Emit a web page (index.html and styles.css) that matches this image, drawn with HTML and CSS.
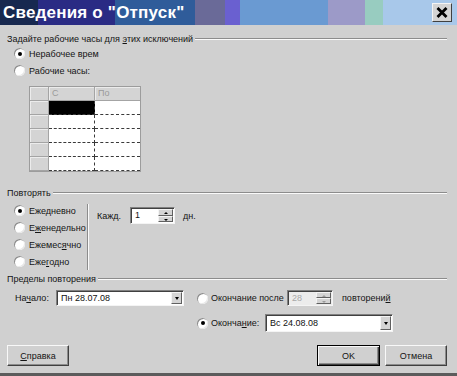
FILE: index.html
```html
<!DOCTYPE html>
<html lang="ru">
<head>
<meta charset="utf-8">
<title>Сведения о "Отпуск"</title>
<link rel="stylesheet" href="styles.css">
</head>
<body>
<div class="window">
  <div class="titlebar">
    <span class="title">Сведения о "Отпуск"</span>
    <span class="close"><svg width="12" height="11" viewBox="0 0 12 11"><path d="M1.5 1 L10.5 10 M10.5 1 L1.5 10" stroke="#000" stroke-width="2.8" fill="none"/></svg></span>
  </div>
  <div class="content">
    <div class="ghead"><span>Задайте рабочие часы для <u>э</u>тих исключений</span><i class="rule"></i></div>
    <div class="opt"><span class="radio on"></span><span>Нерабочее врем</span></div>
    <div class="opt"><span class="radio"></span><span>Рабочие часы:</span></div>
    <div class="grid">
      <div class="hc"></div><div class="hc">С</div><div class="hc last">По</div>
      <div class="hc"></div><div class="dc sel"></div><div class="dc last"></div>
      <div class="hc"></div><div class="dc"></div><div class="dc last"></div>
      <div class="hc"></div><div class="dc"></div><div class="dc last"></div>
      <div class="hc"></div><div class="dc"></div><div class="dc last"></div>
      <div class="hc"></div><div class="dc"></div><div class="dc last"></div>
    </div>

    <div class="ghead g2"><span>Повторять</span><i class="rule"></i></div>
    <div class="repeat">
      <div class="freq">
        <div class="opt"><span class="radio on"></span><span>Еже<u>д</u>невно</span></div>
        <div class="opt"><span class="radio"></span><span>Е<u>ж</u>енедельно</span></div>
        <div class="opt"><span class="radio"></span><span>Ежемес<u>я</u>чно</span></div>
        <div class="opt"><span class="radio"></span><span>Еже<u>г</u>одно</span></div>
      </div>
      <div class="vsep"></div>
      <div class="every">
        <span class="lbl-every">Кажд.</span>
        <span class="spin"><span class="field">1</span><span class="arrows"><i class="up"></i><i class="down"></i></span></span>
        <span class="unit">дн.</span>
      </div>
    </div>

    <div class="ghead g3"><span>Пределы повторения</span><i class="rule"></i></div>
    <div class="range1">
      <span class="lbl-start">На<u>ч</u>ало:</span>
      <span class="combo"><span class="field">Пн 28.07.08</span><span class="drop"><i></i></span></span>
      <span class="radio end-radio"></span>
      <span class="lbl-after">Окончание после</span>
      <span class="spin wide disabled"><span class="field">28</span><span class="arrows"><i class="up"></i><i class="down"></i></span></span>
      <span class="unit2">повторени<u>й</u></span>
    </div>
    <div class="range2">
      <span class="radio on"></span>
      <span class="lbl-end">Оконча<u>н</u>ие:</span>
      <span class="combo"><span class="field">Вс 24.08.08</span><span class="drop"><i></i></span></span>
    </div>

    <div class="buttons">
      <span class="btn"><u>С</u>правка</span>
      <span class="spacer"></span>
      <span class="btn def">OK</span>
      <span class="btn">Отмена</span>
    </div>
  </div>
</div>
</body>
</html>
```

FILE: styles.css
```css
html, body {
  margin: 0;
  padding: 0;
  background: #d0d0d0;
}
body {
  font-family: "Liberation Sans", Arial, sans-serif;
  font-size: 9px;
  color: #141414;
}
u { text-decoration: underline; text-underline-offset: 1px; }

.window {
  width: 457px;
  height: 376px;
  box-sizing: border-box;
  background: #d0d0d0;
  display: flex;
  flex-direction: column;
  border-bottom: 3px solid #5c5c5c;
}

.titlebar {
  flex: none;
  height: 25px;
  display: flex;
  align-items: center;
  padding: 0 5px 0 3px;
  background: linear-gradient(to right,
    #17284f 0 38px,
    #2a2b84 38px 115px,
    #2f5c9a 115px 195px,
    #6a6a98 195px 225px,
    #6a60d0 225px 240px,
    #6a9ad2 240px 328px,
    #9c9ac8 328px 365px,
    #98ccc0 365px 383px,
    #a8c8ea 383px);
}
.title {
  color: #fff;
  font-weight: bold;
  font-size: 17px;
  letter-spacing: 0.2px;
}
.close {
  margin-left: auto;
  width: 20px;
  height: 19px;
  box-sizing: border-box;
  background: #d4d4d4;
  border: 1px solid;
  border-color: #f4f4f4 #404040 #404040 #f4f4f4;
  display: flex;
  align-items: center;
  justify-content: center;
}

.content {
  flex: 1;
  display: flex;
  flex-direction: column;
  padding: 7px 10px 0 7px;
}

.ghead {
  display: flex;
  align-items: center;
  height: 13px;
  gap: 2px;
}
.ghead .rule {
  flex: 1;
  height: 0;
  border-top: 1px solid #8c8c8c;
  border-bottom: 1px solid #fafafa;
}
.g2 { margin-top: 14px; }
.g3 { margin-top: 2px; }

.opt {
  display: flex;
  align-items: center;
  height: 17px;
  padding-left: 7px;
  gap: 4px;
}

.radio {
  flex: none;
  width: 11px;
  height: 11px;
  border-radius: 50%;
  background: #fff;
  box-shadow: inset 1px 1px 0 #8c8c8c, inset -1px -1px 0 #e8e8e8;
  display: inline-flex;
  align-items: center;
  justify-content: center;
}
.radio.on::after {
  content: "";
  width: 4px;
  height: 4px;
  border-radius: 50%;
  background: #000;
}

.grid {
  margin: 7px 0 0 22px;
  width: 112px;
  box-sizing: border-box;
  display: grid;
  grid-template-columns: 19px 46px 45px;
  grid-auto-rows: 14px;
  border: 1px solid #9c9c9c;
  background: #fff;
}
.hc {
  background: #d4d4d4;
  border-right: 1px solid #a4a4a4;
  border-bottom: 1px solid #a4a4a4;
  box-shadow: inset 1px 1px 0 #ececec;
  color: #9a9a9a;
  padding-left: 3px;
  line-height: 13px;
}
.hc.last { border-right: none; }
.dc {
  background: #fff;
  border-right: 1px dashed #3a3a3a;
  border-bottom: 1px dashed #3a3a3a;
}
.dc.last { border-right: none; }
.dc.sel { background: #000; }

.repeat {
  display: flex;
  margin-top: 3px;
}
.freq {
  width: 80px;
}
.vsep {
  width: 0;
  border-left: 1px solid #8c8c8c;
  border-right: 1px solid #fafafa;
  margin-top: 2px;
}
.every {
  display: flex;
  align-items: center;
  height: 17px;
  margin-top: 5px;
  padding-left: 8px;
}
.lbl-every { width: 33px; }
.unit { margin-left: 8px; }

.spin {
  display: inline-flex;
  width: 45px;
  height: 17px;
  box-sizing: border-box;
  background: #fff;
  border: 1px solid;
  border-color: #808080 #f4f4f4 #f4f4f4 #808080;
  box-shadow: inset 1px 1px 0 #404040;
}
.spin .field {
  flex: 1;
  padding: 2px 0 0 4px;
}
.arrows {
  width: 15px;
  display: flex;
  flex-direction: column;
  padding: 1px 1px 1px 0;
}
.arrows i {
  flex: 1;
  background: #d4d4d4;
  border: 1px solid;
  border-color: #f4f4f4 #606060 #606060 #f4f4f4;
  position: relative;
}
.arrows i::after {
  content: "";
  position: absolute;
  left: 5px;
  top: 2px;
  width: 0;
  height: 0;
  border-left: 2px solid transparent;
  border-right: 2px solid transparent;
}
.arrows i.up::after { border-bottom: 2px solid #000; }
.arrows i.down::after { border-top: 2px solid #000; }
.spin.disabled { background: #ececec; color: #a8a8a8; }
.spin.disabled .arrows i::after { border-bottom-color: #9a9a9a; border-top-color: #9a9a9a; }
.spin.wide { width: 46px; height: 16px; }

.range1 {
  display: flex;
  align-items: center;
  height: 16px;
  margin-top: 5px;
  padding-left: 8px;
}
.lbl-start { width: 41px; }
.combo {
  display: inline-flex;
  width: 128px;
  height: 16px;
  box-sizing: border-box;
  background: #fff;
  border: 1px solid;
  border-color: #808080 #f4f4f4 #f4f4f4 #808080;
  box-shadow: inset 1px 1px 0 #404040;
}
.combo .field {
  flex: 1;
  padding: 2px 0 0 4px;
  color: #111;
}
.drop {
  width: 11px;
  margin: 1px 1px 1px 0;
  background: #d4d4d4;
  border: 1px solid;
  border-color: #f4f4f4 #606060 #606060 #f4f4f4;
  box-sizing: border-box;
  display: flex;
  align-items: center;
  justify-content: center;
}
.drop i {
  width: 0;
  height: 0;
  border-left: 2.5px solid transparent;
  border-right: 2.5px solid transparent;
  border-top: 3px solid #000;
}
.end-radio { margin-left: 13px; }
.lbl-after { margin-left: 3px; width: 76px; }
.unit2 { margin-left: 9px; }

.range2 {
  display: flex;
  align-items: center;
  height: 18px;
  margin-top: 8px;
  padding-left: 190px;
}
.range2 .radio { margin-right: 3px; }
.lbl-end { width: 54px; }
.range2 .combo { height: 18px; }
.range2 .combo .field { padding-top: 3px; }

.buttons {
  display: flex;
  margin-top: auto;
  margin-bottom: 7px;
  gap: 5px;
}
.spacer { flex: 1; }
.btn {
  width: 62px;
  height: 21px;
  box-sizing: border-box;
  background: #d0d0d0;
  border: 1px solid;
  border-color: #f8f8f8 #404040 #404040 #f8f8f8;
  box-shadow: inset -1px -1px 0 #8c8c8c;
  display: flex;
  align-items: center;
  justify-content: center;
}
.btn.def {
  width: 63px;
  border: 1px solid #000;
  box-shadow: inset 1px 1px 0 #f8f8f8, inset -1px -1px 0 #404040, inset -2px -2px 0 #8c8c8c;
}
```
